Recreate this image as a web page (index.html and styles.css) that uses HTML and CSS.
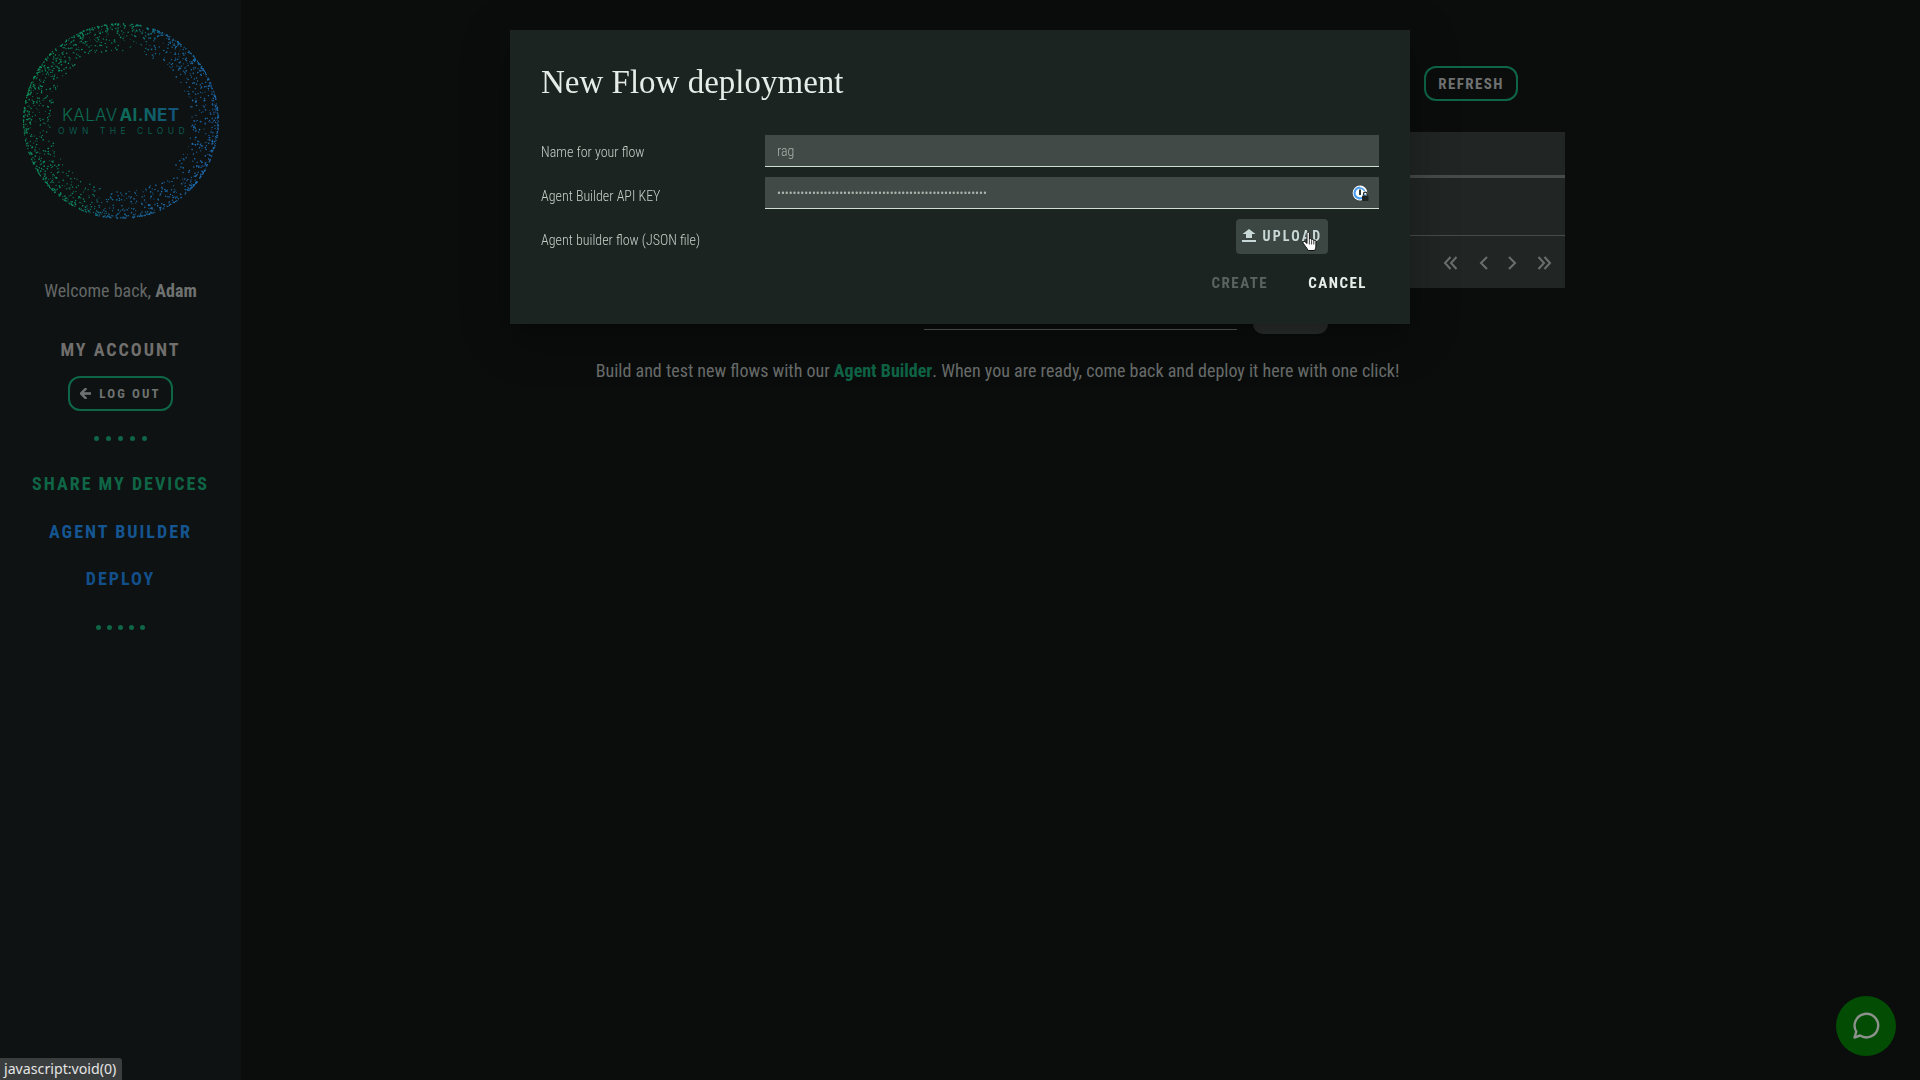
FILE: index.html
```html
<!DOCTYPE html>
<html lang="en">
<head>
<meta charset="utf-8">
<title>New Flow deployment</title>
<link rel="stylesheet" href="styles.css">
</head>
<body>
<div class="app">
  <aside class="sidebar">
    <svg class="logo" viewBox="0 0 200 200" width="200" height="200" aria-label="Kalavai.net logo">
      <defs>
        <linearGradient id="ring" gradientUnits="userSpaceOnUse" x1="0" y1="70" x2="200" y2="130">
          <stop offset="0" stop-color="#0b8f5a"/>
          <stop offset="0.42" stop-color="#0c8460"/>
          <stop offset="0.56" stop-color="#17699a"/>
          <stop offset="1" stop-color="#1f6cb8"/>
        </linearGradient>
        <linearGradient id="word" gradientUnits="userSpaceOnUse" x1="42" y1="0" x2="160" y2="0">
          <stop offset="0" stop-color="#0b6b4c"/>
          <stop offset="0.6" stop-color="#0d6a5c"/>
          <stop offset="1" stop-color="#14507f"/>
        </linearGradient>
      </defs>
      <g class="ring" id="ring-dots"></g>
      <text class="logo-word" x="41" y="100"><tspan class="logo-light">KALAV</tspan><tspan class="logo-bold" dx="2">AI.NET</tspan></text>
      <text class="logo-tag" x="37" y="113">OWN THE CLOUD</text>
    </svg>
    <p class="welcome">Welcome back, <b>Adam</b></p>
    <h2 class="account">MY ACCOUNT</h2>
    <a class="outline-btn logout" href="#">
      <svg viewBox="4 4 16 16" width="11" height="11"><path d="M20 11H7.830l5.590-5.590L12 4l-8 8 8 8 1.410-1.410L7.830 13H20z" fill="currentColor" stroke="currentColor" stroke-width="1.500"/></svg>
      LOG OUT
    </a>
    <div class="dots"><i></i><i></i><i></i><i></i><i></i></div>
    <nav class="nav">
      <a class="nav-green" href="#">SHARE MY DEVICES</a>
      <a class="nav-blue" href="#">AGENT BUILDER</a>
      <a class="nav-deep" href="#">DEPLOY</a>
    </nav>
    <div class="dots dots-tight"><i></i><i></i><i></i><i></i><i></i></div>
  </aside>

  <main class="main">
    <div class="toolbar"><a class="outline-btn refresh" href="#">REFRESH</a></div>
    <section class="table">
      <div class="table-head"></div>
      <div class="table-row"></div>
      <div class="table-foot">
        <svg viewBox="0 0 16 16" width="16" height="16"><path d="M7.500 2 2 8l5.500 6M13.500 2 8 8l5.500 6"/></svg>
        <svg viewBox="0 0 16 16" width="16" height="16"><path d="M11 2 5 8l6 6"/></svg>
        <svg viewBox="0 0 16 16" width="16" height="16"><path d="m5 2 6 6-6 6"/></svg>
        <svg viewBox="0 0 16 16" width="16" height="16"><path d="M2.500 2 8 8l-5.500 6M8.500 2 14 8l-5.500 6"/></svg>
      </div>
    </section>
    <div class="hidden-form">
      <div class="hidden-input"></div>
      <div class="hidden-btn"></div>
    </div>
    <p class="intro">Build and test new flows with our <a href="#">Agent Builder</a>. When you are ready, come back and deploy it here with one click!</p>
  </main>
</div>

<div class="modal" role="dialog">
  <h1 class="modal-title">New Flow deployment</h1>
  <div class="field">
    <label for="flow-name">Name for your flow</label>
    <input id="flow-name" class="input" type="text" value="rag">
  </div>
  <div class="field field-key">
    <label for="flow-key">Agent Builder API KEY</label>
    <div class="input-wrap">
      <input id="flow-key" class="input" type="password" value="aaaaaaaaaaaaaaaaaaaaaaaaaaaaaaaaaaaaaaaaaaaaaaaaaaaaaa">
      <svg class="pm-icon" viewBox="0 0 18 18" width="18" height="18">
        <circle cx="8" cy="8" r="7.400" fill="#fff"/>
        <path d="M8 2.600A5.400 5.400 0 1 0 13.200 9.400" fill="none" stroke="#4a9df0" stroke-width="2.200"/>
        <path d="M8 3a5 5 0 0 1 4.500 3" fill="none" stroke="#4a9df0" stroke-width="1.400"/>
        <rect x="7" y="4.500" width="2" height="5.500" fill="#2e3a3a"/>
        <rect x="10" y="10.500" width="6.500" height="5.500" rx="1" fill="#1f2423"/>
        <path d="M11.500 10.500V9a1.800 1.800 0 0 1 3.600 0v1.500" fill="none" stroke="#1f2423" stroke-width="1.200"/>
      </svg>
    </div>
  </div>
  <div class="field field-upload">
    <label>Agent builder flow (JSON file)</label>
    <button class="upload" type="button">
      <svg viewBox="0 0 14 13" width="14" height="13"><path d="M4 9h6V5h3.500L7 0 .5 5H4zM0 11h14v2H0z" fill="currentColor"/></svg>
      UPLOAD
    </button>
  </div>
  <div class="actions">
    <button class="text-btn disabled" type="button">CREATE</button>
    <button class="text-btn" type="button">CANCEL</button>
  </div>
  <svg class="cursor" viewBox="0 0 18 22" width="18" height="22">
    <path d="M5 2.200c0-1.500 2.400-1.500 2.400 0v6.300c0-1.300 2.200-1.300 2.200 0v.7c0-1.200 2.200-1.200 2.200 0v.8c0-1.100 2.100-1.100 2.100 .2v4.800c0 2-.8 3-1.200 4.500H6.200C5.600 18 4.500 16.800 3.300 15.200L1.200 12.300c-.9-1.300.8-2.600 1.900-1.500L5 12.500z" fill="#fff" stroke="#111" stroke-width="1"/>
    <path d="M7.400 9v4.500M9.600 9.500v4M11.800 10v3.500" stroke="#111" stroke-width=".8" fill="none"/>
  </svg>
</div>

<button class="chat" type="button" aria-label="Chat">
  <svg viewBox="0 0 30 30" width="30" height="30"><path d="M3.500 26.500 5.300 20.700A11.800 11.800 0 1 1 9 24.500z" fill="none" stroke="currentColor" stroke-width="2.400" stroke-linejoin="round"/></svg>
</button>
<div class="status">javascript:void(0)</div>
<script src="logo.js"></script>
</body>
</html>
```
FILE: styles.css
```css
* { box-sizing: border-box; }
html, body { margin: 0; height: 100%; }
body {
  background: #0b0d0d;
  color: #6f7271;
  font-family: "Roboto Condensed", Roboto, "Liberation Sans", sans-serif;
  font-stretch: 75%;
  overflow: hidden;
}
a { color: inherit; text-decoration: none; }

.app { display: grid; grid-template-columns: 241px 1fr; height: 1080px; }

/* Sidebar */
.sidebar {
  background: #0e1212;
  display: flex;
  flex-direction: column;
  align-items: center;
  padding-top: 21px;
}
.logo { display: block; flex: none; }
.ring { fill: url(#ring); }
.logo-word { font: 400 17px "Inter", "Open Sans", sans-serif; letter-spacing: .35px; fill: url(#word); }
.logo-light { font-weight: 300; }
.logo-bold { font-weight: 700; }
.logo-tag { font: 400 8.500px "Inter", "Open Sans", sans-serif; letter-spacing: 4.500px; fill: #0b5a50; }
.welcome { margin: 58px 0 0; font-size: 18px; line-height: 24px; color: #646766; }
.welcome b { color: #6f7271; }
.account {
  margin: 35px 0 0;
  font-size: 18px;
  line-height: 24px;
  font-weight: 700;
  letter-spacing: 2px;
  color: #716f6d;
}
.outline-btn {
  display: inline-flex;
  align-items: center;
  justify-content: center;
  border: 2px solid #0f6647;
  border-radius: 12px;
  font-weight: 700;
  color: #6f7271;
}
.logout {
  width: 105px;
  height: 35px;
  margin-top: 14px;
  gap: 8px;
  font-size: 13px;
  letter-spacing: 2.100px;
}
.dots { display: flex; gap: 6.800px; margin-top: 25px; }
.dots i { width: 5px; height: 5px; border-radius: 50%; background: #0f6647; }
.dots-tight { gap: 6.200px; margin-top: 34px; }
.nav { display: flex; flex-direction: column; align-items: center; gap: 23.500px; margin-top: 31px; }
.nav a { font-size: 18px; line-height: 24px; font-weight: 700; letter-spacing: 2px; }
.nav-green { color: #0f6647; }
.nav-blue { color: #155591; }
.nav-deep { color: #124f8b; }

/* Main */
.main { margin-left: 189px; width: 1135px; padding-top: 66px; }
.toolbar { display: flex; justify-content: flex-end; padding-right: 47px; }
.refresh { width: 94px; height: 35px; font-size: 15px; letter-spacing: 1.400px; }
.table {
  margin: 31px 0 0 400px;
  height: 156px;
  background: #212624;
  display: flex;
  flex-direction: column;
}
.table-head { height: 46px; border-bottom: 3px solid #474b49; flex: none; }
.table-row { height: 58px; border-bottom: 1px solid #474b49; flex: none; }
.table-foot { flex: 1; display: flex; align-items: center; justify-content: flex-end; padding: 2px 13px 0 0; }
.table-foot svg { fill: none; stroke: #6a6f6e; stroke-width: 2; }
.table-foot svg:nth-child(2) { margin: 0 12px 0 17px; }
.table-foot svg:nth-child(4) { margin-left: 16px; }
.hidden-form { display: flex; margin: 10px 0 0 494px; height: 36px; gap: 16px; }
.hidden-input { width: 313px; height: 32px; border-bottom: 1px solid #5a5e5c; }
.hidden-btn { width: 75px; background: #2b302e; border-radius: 0 0 10px 10px; }
.intro { margin: 24px 0 0; font-size: 18px; line-height: 26px; text-align: center; color: #6a6e6c; }
.intro a { color: #0f6647; font-weight: 700; }

/* Modal */
.modal {
  position: fixed;
  left: 510px;
  top: 30px;
  width: 900px;
  height: 294px;
  padding: 0 31px;
  background: #1c2422;
  color: #c9d6cc;
  box-shadow: 0 11px 15px -7px rgba(0, 0, 0, .2), 0 24px 38px 3px rgba(0, 0, 0, .14), 0 9px 46px 8px rgba(0, 0, 0, .12);
}
.modal-title {
  margin: 0;
  padding-top: 30px;
  height: 105px;
  font: 400 33px/44px "Liberation Serif", serif;
  color: #e6ede8;
}
.field { display: flex; align-items: center; height: 32px; margin-bottom: 10px; }
.field label { width: 224px; flex: none; font-size: 14px; font-weight: 300; padding-top: 2px; color: #c4d1c8; }
.field-key label { padding-top: 6px; }
.input-wrap { position: relative; flex: 1; display: flex; }
.input {
  flex: 1;
  min-width: 0;
  height: 32px;
  padding: 1px 12px 0;
  border: 0;
  border-bottom: 1px solid #cfdfd3;
  border-radius: 0;
  background: #414a46;
  color: #a8b4ac;
  font-family: inherit;
  font-stretch: 75%;
  font-weight: 300;
  font-size: 14px;
  outline: 0;
}
input[type="password"] { font-size: 12px; letter-spacing: 0; padding-bottom: 0; padding-top: 0; }
.pm-icon { position: absolute; right: 9px; top: 8px; }
.field-upload { align-items: flex-start; justify-content: space-between; height: 35px; margin-bottom: 0; }
.field-upload label { padding-top: 13px; }
.upload {
  display: inline-flex;
  align-items: center;
  justify-content: center;
  gap: 7px;
  width: 92px;
  height: 35px;
  margin-right: 51px;
  padding: 0 0 2px;
  border: 0;
  border-radius: 4px;
  background: #3c4642;
  color: #c8d8d6;
  font: inherit;
  font-stretch: 75%;
  font-weight: 700;
  font-size: 14px;
  letter-spacing: 2.200px;
}
.actions { display: flex; justify-content: flex-end; gap: 40px; margin-top: 18px; padding-right: 12px; }
.text-btn {
  padding: 0;
  border: 0;
  background: none;
  color: #e8eeea;
  font: inherit;
  font-stretch: 75%;
  font-weight: 700;
  font-size: 15px;
  line-height: 22px;
  letter-spacing: 1.500px;
}
.text-btn.disabled { color: #5c6462; }
.cursor { position: absolute; left: 792px; top: 201px; }

/* Floating */
.chat {
  position: fixed;
  left: 1836px;
  top: 996px;
  width: 60px;
  height: 60px;
  padding: 0;
  border: 0;
  border-radius: 50%;
  background: #024c03;
  color: #8c918c;
  display: flex;
  align-items: center;
  justify-content: center;
}
.status {
  position: fixed;
  left: 0;
  bottom: 0;
  width: 122px;
  height: 22px;
  padding-left: 4px;
  background: #3a3d3d;
  border-radius: 0 3px 0 0;
  color: #e4e4e4;
  font: 400 14.200px/22px "Noto Sans", sans-serif;
  font-stretch: 100%;
  white-space: nowrap;
}
```
FILE: logo.js
```js
// Scatter the particle ring of the logo; the seed keeps it the same on every load.
(function () {
  var group = document.getElementById("ring-dots");
  var seed = 7;
  function rand() {
    seed = (seed * 16807) % 2147483647;
    return seed / 2147483647;
  }
  var svgNS = "http://www.w3.org/2000/svg";
  for (var i = 0; i < 1700; i++) {
    var angle = rand() * Math.PI * 2;
    var depth = Math.pow(rand(), 2.4) * 27;
    var r = 97.4 - depth;
    var dot = document.createElementNS(svgNS, "circle");
    dot.setAttribute("cx", (100 + Math.cos(angle) * r).toFixed(2));
    dot.setAttribute("cy", (100 + Math.sin(angle) * r).toFixed(2));
    dot.setAttribute("r", (0.45 + rand() * 0.4).toFixed(2));
    group.appendChild(dot);
  }
})();
```
